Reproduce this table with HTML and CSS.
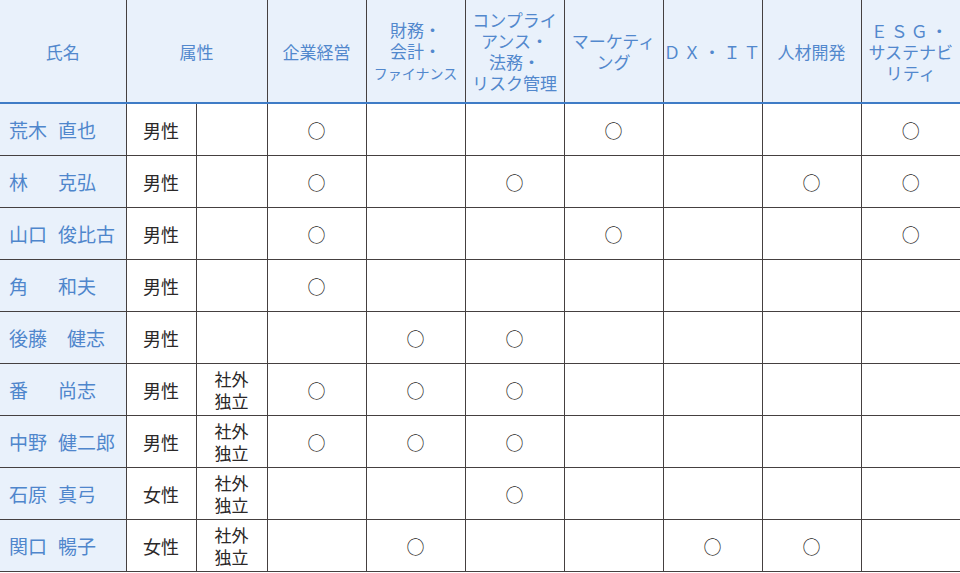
FILE: index.html
```html
<!DOCTYPE html>
<html lang="ja">
<head>
<meta charset="utf-8">
<link rel="stylesheet" href="styles.css">
</head>
<body>
<table class="skills">
  <colgroup>
    <col class="c-name"><col class="c-sex"><col class="c-ind">
    <col class="c-sk"><col class="c-sk"><col class="c-sk"><col class="c-sk"><col class="c-sk"><col class="c-sk"><col class="c-sk">
  </colgroup>
  <thead>
    <tr>
      <th>氏名</th>
      <th colspan="2">属性</th>
      <th>企業経営</th>
      <th>財務・<br>会計・<br><span class="small">ファイナンス</span></th>
      <th>コンプライ<br>アンス・<br>法務・<br>リスク管理</th>
      <th>マーケティ<br>ング</th>
      <th class="wide">ＤＸ・ＩＴ</th>
      <th>人材開発</th>
      <th><span class="wide">ＥＳＧ・</span><br>サステナビ<br>リティ</th>
    </tr>
  </thead>
  <tbody>
    <tr><td class="name"><span class="fam">荒木</span><span class="giv">直也</span></td><td class="sex">男性</td><td class="ind"></td><td>○</td><td></td><td></td><td>○</td><td></td><td></td><td>○</td></tr>
    <tr><td class="name"><span class="fam">林</span><span class="giv">克弘</span></td><td class="sex">男性</td><td class="ind"></td><td>○</td><td></td><td>○</td><td></td><td></td><td>○</td><td>○</td></tr>
    <tr><td class="name"><span class="fam">山口</span><span class="giv">俊比古</span></td><td class="sex">男性</td><td class="ind"></td><td>○</td><td></td><td></td><td>○</td><td></td><td></td><td>○</td></tr>
    <tr><td class="name"><span class="fam">角</span><span class="giv">和夫</span></td><td class="sex">男性</td><td class="ind"></td><td>○</td><td></td><td></td><td></td><td></td><td></td><td></td></tr>
    <tr><td class="name"><span class="fam">後藤</span><span class="giv far">健志</span></td><td class="sex">男性</td><td class="ind"></td><td></td><td>○</td><td>○</td><td></td><td></td><td></td><td></td></tr>
    <tr><td class="name"><span class="fam">番</span><span class="giv">尚志</span></td><td class="sex">男性</td><td class="ind">社外<br>独立</td><td>○</td><td>○</td><td>○</td><td></td><td></td><td></td><td></td></tr>
    <tr><td class="name"><span class="fam">中野</span><span class="giv">健二郎</span></td><td class="sex">男性</td><td class="ind">社外<br>独立</td><td>○</td><td>○</td><td>○</td><td></td><td></td><td></td><td></td></tr>
    <tr><td class="name"><span class="fam">石原</span><span class="giv">真弓</span></td><td class="sex">女性</td><td class="ind">社外<br>独立</td><td></td><td></td><td>○</td><td></td><td></td><td></td><td></td></tr>
    <tr><td class="name"><span class="fam">関口</span><span class="giv">暢子</span></td><td class="sex">女性</td><td class="ind">社外<br>独立</td><td></td><td>○</td><td></td><td></td><td>○</td><td>○</td><td></td></tr>
  </tbody>
</table>
</body>
</html>
```

FILE: styles.css
```css
html, body {
  margin: 0;
  padding: 0;
  background: #ffffff;
}

body {
  font-family: "Noto Sans CJK JP", "Noto Sans", sans-serif;
  color: #2b2828;
}

.skills {
  border-collapse: collapse;
  table-layout: fixed;
  width: 960px;
}

.c-name { width: 126px; }
.c-sex { width: 70px; }
.c-ind { width: 71px; }
.c-sk { width: 99px; }

.skills th {
  height: 102px;
  padding: 0;
  background: #e9f1fb;
  color: #5288cd;
  font-weight: 400;
  font-size: 17px;
  line-height: 21px;
  text-align: center;
  vertical-align: middle;
  border-left: 1px solid #454040;
  border-bottom: 2px solid #3f7cc6;
  white-space: nowrap;
}

.skills th:first-child {
  border-left: none;
}

.skills th .small {
  font-size: 14px;
}

.skills .wide {
  letter-spacing: 3px;
}

.skills td {
  height: 51px;
  padding: 0;
  border-left: 1px solid #454040;
  border-bottom: 1px solid #454040;
  text-align: center;
  vertical-align: middle;
  font-size: 18px;
  line-height: 22px;
  color: #2b2828;
}

.skills td.name {
  border-left: none;
  background: #e9f1fb;
  color: #4f86cc;
  text-align: left;
  padding-left: 9px;
  font-size: 19px;
  white-space: nowrap;
}

.name .fam {
  display: inline-block;
  width: 49px;
}

.name .giv.far {
  margin-left: 9px;
}

.skills td.ind {
  font-size: 17px;
  line-height: 22px;
}
```
